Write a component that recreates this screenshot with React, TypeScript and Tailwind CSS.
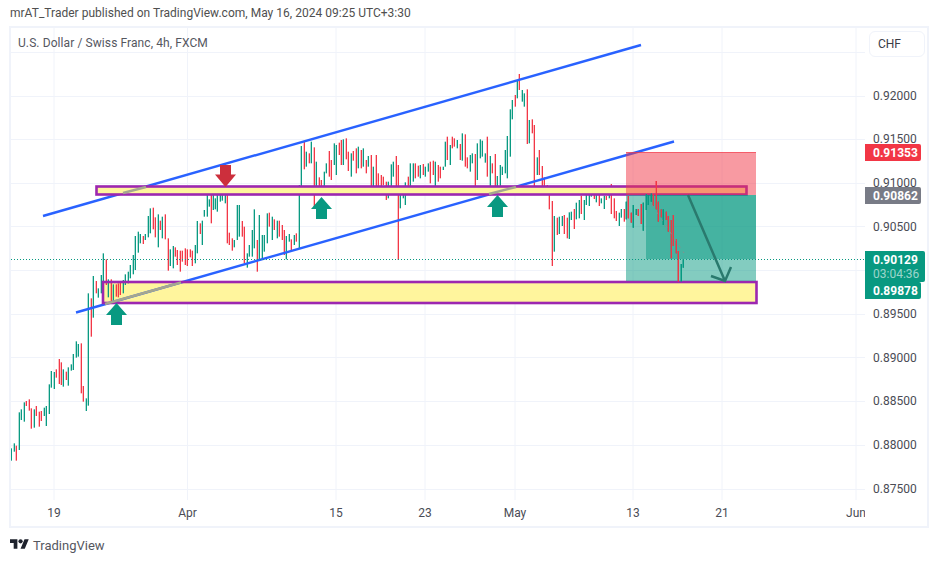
const B: [number, number, [number, number, number, number][]][] = [
  // origin x, origin y, [zoom x, y1, y2, 1=green 0=red]
  [0, 330, [[34,355,392,1],[43,340,365,1],[49,347,392,0],[58,247,360,1],[64,238,270,1],[73,217,275,1],[79,213,228,0],[88,208,242,0],[94,235,296,0],[103,238,293,1],[109,228,258,0],[118,245,290,0],[124,243,273,0],[133,233,258,1],[139,228,288,1],[148,163,252,1],[154,123,173,1],[163,126,177,1],[169,118,143,0],[178,87,162,0],[184,97,165,0],[190,118,170,1],[199,125,150,0],[205,112,167,1],[214,103,122,1],[220,72,120,1],[229,34,83,1],[235,42,80,1],[244,40,190,0],[250,168,215,0],[259,205,243,1]]],
  [60, 240, [[85,160,497,1],[94,175,290,0],[100,108,233,1],[109,123,160,0],[115,145,173,1],[124,105,160,1],[130,40,172,1],[139,58,135,0],[145,118,172,1],[154,118,185,0],[160,133,185,1],[169,133,170,0],[175,130,172,0],[181,125,165,0],[190,120,160,1],[196,103,135,1],[205,95,130,1],[211,75,115,1],[220,45,103,1]]],
  [130, 160, [[16,228,330,1],[25,215,278,1],[31,222,250,1],[40,228,252,0],[46,222,240,1],[55,168,232,1],[61,145,220,1],[70,143,208,0],[76,172,232,0],[85,163,262,1],[91,182,210,0],[97,170,235,1],[106,163,238,0],[115,235,332,0],[121,268,318,1],[130,258,325,1],[136,262,290,0],[142,270,315,0],[151,272,335,0],[157,272,305,0],[166,265,315,0],[172,268,318,0],[181,268,292,0],[187,272,318,0],[196,255,310,1],[202,183,280,1],[211,190,222,0],[217,182,255,1],[223,150,170,1],[232,96,170,1],[238,118,140,1],[244,90,190,0],[250,105,150,1],[256,115,148,1],[262,95,155,1],[271,90,125,1],[277,80,122,1],[286,85,130,1],[292,95,250,0],[298,218,255,0],[307,235,272,0],[313,240,262,1],[322,135,240,1],[328,135,230,1],[337,183,230,0],[343,200,310,0],[352,280,323,1],[358,255,290,1],[367,210,290,1],[373,148,265,1],[382,240,335,0],[388,165,300,1],[397,225,295,1],[403,225,275,1],[412,160,250,1],[418,158,200,0],[427,170,240,1],[433,178,210,0],[442,182,235,1],[448,182,230,0],[457,195,240,0],[463,210,285,0],[469,228,298,1],[478,222,245,1],[484,238,275,0],[493,225,255,1],[499,220,245,0],[508,75,265,1]]],
  [300, 70, [[4,228,370,1],[13,215,298,0],[19,245,290,1],[28,250,280,0],[34,215,280,1],[43,232,415,0],[49,275,375,1],[58,322,372,0],[64,330,365,0],[73,305,355,1],[79,280,310,1],[88,243,320,0],[94,270,330,0],[103,220,285,1],[109,225,315,1],[118,218,255,0],[124,210,285,0],[130,208,285,1],[139,205,268,0],[145,245,303,0],[154,250,320,1],[160,243,272,0],[169,235,310,0],[175,230,295,1],[184,240,295,0],[190,235,290,1],[199,270,310,0],[205,258,290,1],[214,255,355,0],[220,290,350,1],[229,255,350,0],[235,310,350,0],[244,315,350,0],[250,320,345,0],[259,335,390,0],[265,335,385,1],[274,283,360,1],[280,275,320,1],[289,258,350,0],[295,285,570,0],[301,350,415,1],[310,355,385,1],[316,337,405,1],[325,320,360,0],[331,280,350,1],[340,280,335,1],[346,280,325,0],[355,287,320,0],[361,285,325,1],[370,282,315,0],[376,290,320,1],[385,280,305,1],[391,275,340,0],[400,272,315,0],[406,275,372,1],[415,285,335,0],[421,290,325,0],[430,290,300,1],[436,215,290,1],[442,200,270,0],[451,225,285,1],[457,200,235,0],[463,205,230,0],[472,210,235,1],[481,222,270,0],[487,190,272,1],[496,193,290,0],[502,262,295,0],[511,255,305,1],[517,250,280,1],[526,252,350,0],[532,220,330,1],[541,208,265,1],[547,212,260,1],[556,250,278,1],[562,200,320,0],[571,258,350,1],[577,280,310,0],[586,252,372,0],[592,318,355,1],[601,285,360,1],[607,290,315,1],[616,240,310,1],[622,198,325,1],[631,118,260,1],[637,90,148,1],[646,75,110,0],[652,30,85,1],[658,12,60,0],[667,60,95,1],[673,70,110,1],[682,58,222,0],[688,150,220,1],[697,148,190,0],[703,165,350,0],[712,262,315,1],[718,240,315,0],[727,288,350,0],[733,322,368,0],[742,345,368,0],[748,350,418,0]]],
  [540, 170, [[37,93,288,0],[43,138,245,1],[52,143,195,0],[58,140,192,1],[67,138,168,1],[73,135,192,0],[82,143,205,0],[88,127,207,1],[94,125,150,1],[103,117,177,0],[109,98,148,1],[118,90,145,1],[124,77,132,0],[133,90,150,1],[139,52,105,1],[148,68,108,1],[154,57,80,1],[163,52,87,0],[169,57,97,1],[178,66,108,0],[184,85,100,1],[193,77,117,1],[199,78,90,0],[208,52,85,1],[214,42,132,0],[223,85,145,0],[229,123,153,0],[238,128,168,1],[244,117,143,1],[253,117,155,0],[259,95,148,1],[265,78,145,0],[274,128,158,0],[280,105,173,1],[289,117,135,1],[295,117,138,0],[304,102,162,0],[310,98,182,1],[319,72,120,1],[325,75,105,1],[334,70,95,1],[340,72,107,0],[349,33,118,0],[355,95,155,0],[364,118,142,0],[370,118,165,1],[379,125,150,0],[385,138,185,0],[394,150,265,0],[400,135,228,0],[409,208,250,0],[415,243,335,0],[424,282,335,1],[430,268,293,1]]],
];

const bars = B.flatMap(([ox, oy, list]) =>
  list.map(([x, a, b, g]) => ({ x: ox + x / 3, y1: oy + a / 3, y2: oy + b / 3, g }))
);

function Bars({ from = 0 }: { from?: number }) {
  return (
    <g>
      {bars
        .filter((b) => b.x >= from)
        .map((b, i) => (
          <rect
            key={i}
            x={b.x - 0.65}
            y={b.y1}
            width={1.3}
            height={b.y2 - b.y1}
            fill={b.g ? "#089981" : "#f23645"}
          />
        ))}
    </g>
  );
}

const hGrid = [52, 96, 139, 183, 226, 270, 314, 357, 401, 445, 489];
const vGrid = [54, 187.5, 336, 425, 515, 633, 722, 856];

function Chart() {
  return (
    <svg width={854} height={472} viewBox="11 28 854 472" className="block">
      {hGrid.map((y) => (
        <line key={y} x1={11} x2={865} y1={y + 0.5} y2={y + 0.5} stroke="#f0f3fa" strokeWidth={1} />
      ))}
      {vGrid.map((x) => (
        <line key={x} x1={x} x2={x} y1={28} y2={500} stroke="#f0f3fa" strokeWidth={1} />
      ))}
      <rect x={103} y={282} width={653.5} height={21} fill="#fff59d" />
      <Bars />
      <line x1={43} y1={216} x2={641} y2={45} stroke="#2962ff" strokeWidth={2.4} />
      <line x1={76} y1={312.5} x2={674} y2={141.5} stroke="#2962ff" strokeWidth={2.4} />
      <rect x={103} y={282} width={653.5} height={21} fill="none" stroke="#9c27b0" strokeWidth={2.6} />
      <line x1={105} y1={304} x2={181} y2={282.5} stroke="#a5a68f" strokeWidth={2.4} />
      <rect x={96.5} y={186.5} width={650} height={8} fill="#fff59d" stroke="#9c27b0" strokeWidth={2.6} />
      <line x1={123} y1={193} x2={146} y2={187} stroke="#a5a68f" strokeWidth={2.4} />
      <line x1={489} y1={194} x2={516} y2={187} stroke="#a5a68f" strokeWidth={2.4} />
      <rect x={626} y={152} width={130} height={43} fill="#f23645" fillOpacity={0.5} />
      <line x1={626} x2={756} y1={152.5} y2={152.5} stroke="#f23645" strokeOpacity={0.6} strokeWidth={1} />
      <rect x={626} y={195} width={130} height={86} fill="#089981" fillOpacity={0.5} />
      <rect x={646} y={195} width={110} height={64} fill="#089981" fillOpacity={0.5} />
      <Bars from={626} />
      <path d="M652 205 L684 253" stroke="#8c8c8c" strokeWidth={1} strokeDasharray="3 5" fill="none" />
      <line x1={11} x2={865} y1={259.5} y2={259.5} stroke="#089981" strokeWidth={1} strokeDasharray="1 2" />
      <path d="M688 195 L725 281 M711 276 L725 281 L731 267" stroke="#2a7a6e" strokeWidth={2.5} fill="none" />
      <path d="M116.5 303 L127 315 H122 V325 H111 V315 H106 Z" fill="#089981" />
      <path d="M321.5 197 L332 209 H327 V219 H316 V209 H311 Z" fill="#089981" />
      <path d="M497.5 195 L508 207 H503 V217 H492 V207 H487 Z" fill="#089981" />
      <path d="M220 165 H231 V174.5 H236 L225.5 187 L215 174.5 H220 Z" fill="#cc2f3c" />
    </svg>
  );
}

const prices = ["0.92000", "0.91500", "0.91000", "0.90500", "", "0.89500", "0.89000", "0.88500", "0.88000", "0.87500"];
const times: [string, number][] = [["19", 43], ["Apr", 176.5], ["15", 325], ["23", 414], ["May", 504], ["13", 622], ["21", 711], ["Jun", 845]];
const font = "font-['Roboto',sans-serif]";

export default function App() {
  return (
    <div className={`w-[939px] h-[563px] bg-white overflow-hidden text-[12px] text-[#4a4c55] ${font}`}>
      <div className="h-[26px] pl-[10px] flex items-center text-[#4f4f4f] tracking-[0.015px]">
        mrAT_Trader published on TradingView.com, May 16, 2024 09:25 UTC+3:30
      </div>
      <div className="ml-[9px] w-[920px] h-[502px] border-2 border-[#f0f3fa] flex flex-col">
        <div className="flex h-[472px]">
          <div className="relative w-[854px] h-[472px]">
            <Chart />
            <div className="absolute left-[7px] top-[6px] text-[#55575f] tracking-[0.09px]">U.S. Dollar / Swiss Franc, 4h, FXCM</div>
          </div>
          <div className="relative w-[62px] h-[472px]">
            <div className="absolute left-[4px] top-[3px] w-[56px] h-[26px] border border-[#f0f3fa] rounded-[6px] pl-[8px] flex items-center text-[#3a3d46]">
              CHF
            </div>
            <div className="pt-[46px] pl-[8px]">
              {prices.map((p, i) => (
                <div key={i} className="h-[43.67px] flex items-center">{p}</div>
              ))}
            </div>
            <div className="absolute left-0 top-[116px] w-[56px] h-[17px] rounded-r-[2px] bg-[#f23645] text-white font-bold pl-[8px] flex items-center">0.91353</div>
            <div className="absolute left-0 top-[159px] w-[56px] h-[17px] rounded-r-[2px] bg-[#787b86] text-white font-bold pl-[8px] flex items-center">0.90862</div>
            <div className="absolute left-0 top-[223px] w-[60px] h-[31px] rounded-r-[2px] bg-[#089981] pl-[8px] flex flex-col justify-center leading-[14px]">
              <span className="text-white font-bold">0.90129</span>
              <span className="text-white/60">03:04:36</span>
            </div>
            <div className="absolute left-0 top-[254px] w-[56px] h-[17px] rounded-r-[2px] bg-[#089981] text-white font-bold pl-[8px] flex items-center">0.89878</div>
          </div>
        </div>
        <div className="relative w-[854px] h-[26px] overflow-hidden">
          {times.map(([t, x]) => (
            <span key={t} className="absolute top-[4px] -translate-x-1/2" style={{ left: x }}>{t}</span>
          ))}
        </div>
      </div>
      <div className="h-[35px] pl-[10px] flex items-center gap-[4px]">
        <svg width={19} height={15} viewBox="0 0 36 28" fill="#1e222d" className="-mt-[2px]">
          <path d="M14 22H7V11H0V4h14v18zM28 22h-8l7.5-18h8L28 22z" />
          <circle cx={20} cy={8} r={4} />
        </svg>
        <span className="text-[13px] text-[#55575f]">TradingView</span>
      </div>
    </div>
  );
}
